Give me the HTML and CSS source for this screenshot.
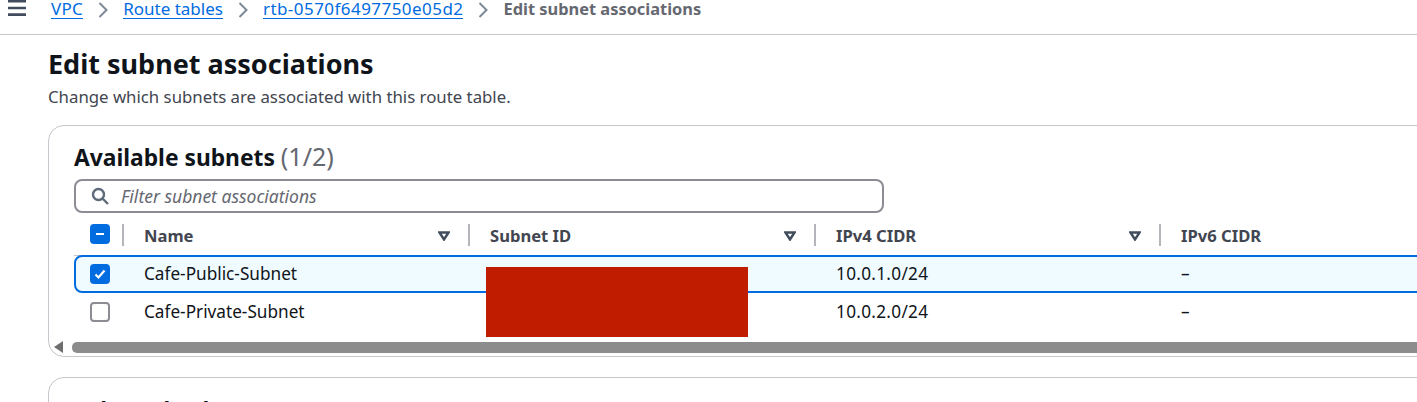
FILE: index.html
```html
<!DOCTYPE html>
<html lang="en">
<head>
    <meta charset="UTF-8">
    <title>Edit subnet associations</title>
    <link rel="stylesheet" href="styles.css">
</head>
<body>
    <div class="topbar">
        <svg class="menu" width="18" height="16" viewBox="0 0 18 16"><path d="M0 1.2h18M0 8h18M0 14.6h18" stroke="#414d5c" stroke-width="2.6" fill="none"/></svg>
        <a href="#" class="crumb vpc">VPC</a>
        <svg class="sep" width="10" height="18" viewBox="0 0 10 18"><path d="M1.5 2l7 7-7 7" stroke="#7d8998" stroke-width="2" fill="none"/></svg>
        <a href="#" class="crumb">Route tables</a>
        <svg class="sep" width="10" height="18" viewBox="0 0 10 18"><path d="M1.5 2l7 7-7 7" stroke="#7d8998" stroke-width="2" fill="none"/></svg>
        <a href="#" class="crumb id">rtb-0570f6497750e05d2</a>
        <svg class="sep" width="10" height="18" viewBox="0 0 10 18"><path d="M1.5 2l7 7-7 7" stroke="#7d8998" stroke-width="2" fill="none"/></svg>
        <span class="crumb-current">Edit subnet associations</span>
    </div>

    <div class="content">
        <h1>Edit subnet associations</h1>
        <p class="subtitle">Change which subnets are associated with this route table.</p>

        <div class="card">
            <h2>Available subnets <span class="count">(1/2)</span></h2>
            <div class="filter">
                <svg width="18" height="18" viewBox="0 0 18 18"><circle cx="7.5" cy="7.5" r="5.5" stroke="#5f6b7a" stroke-width="2.4" fill="none"/><path d="M11.5 11.5L17 17" stroke="#5f6b7a" stroke-width="2.4" fill="none"/></svg>
                <span>Filter subnet associations</span>
            </div>

            <div class="row head">
                <div class="cell check"><span class="box on"><svg width="12" height="12" viewBox="0 0 12 12"><path d="M2 6h8" stroke="#fff" stroke-width="2"/></svg></span></div>
                <div class="cell col">Name<svg class="sort" width="12" height="10" viewBox="0 0 12 10"><path d="M1.5 1.5h9L6 8.5z" stroke="#414d5c" stroke-width="2.4" fill="none"/></svg></div>
                <div class="cell col">Subnet ID<svg class="sort" width="12" height="10" viewBox="0 0 12 10"><path d="M1.5 1.5h9L6 8.5z" stroke="#414d5c" stroke-width="2.4" fill="none"/></svg></div>
                <div class="cell col">IPv4 CIDR<svg class="sort" width="12" height="10" viewBox="0 0 12 10"><path d="M1.5 1.5h9L6 8.5z" stroke="#414d5c" stroke-width="2.4" fill="none"/></svg></div>
                <div class="cell col">IPv6 CIDR</div>
            </div>

            <div class="row selected">
                <div class="cell check"><span class="box on"><svg width="14" height="14" viewBox="0 0 14 14"><path d="M2.5 7.5l3 3 6-7" stroke="#fff" stroke-width="2.2" fill="none"/></svg></span></div>
                <div class="cell">Cafe-Public-Subnet</div>
                <div class="cell"></div>
                <div class="cell num">10.0.1.0/24</div>
                <div class="cell">–</div>
            </div>
            <div class="row">
                <div class="cell check"><span class="box"></span></div>
                <div class="cell">Cafe-Private-Subnet</div>
                <div class="cell"></div>
                <div class="cell num">10.0.2.0/24</div>
                <div class="cell">–</div>
            </div>

            <div class="redact"></div>

            <div class="scrollbar">
                <svg width="10" height="12" viewBox="0 0 10 12"><path d="M9 0v12L0 6z" fill="#6f6f6f"/></svg>
                <div class="thumb"></div>
            </div>
        </div>

        <div class="card next">
            <h2>Selected subnets</h2>
        </div>
    </div>
</body>
</html>
```

FILE: styles.css
```css
* {
    margin: 0;
    padding: 0;
    box-sizing: border-box;
}
html, body {
    height: 402px;
    overflow: hidden;
}
body {
    background-color: #fff;
    color: #0f141a;
    font-family: "Noto Sans", "Open Sans", sans-serif;
    font-size: 17.2px;
}
.num {
    letter-spacing: 0.3px;
}
.topbar {
    height: 35px;
    border-bottom: 1px solid #c6c6cd;
    display: flex;
    align-items: flex-start;
    padding: 1px 0 0 7px;
    font-size: 17px;
    white-space: nowrap;
}
.menu {
    margin: -1px 25px 0 1px;
}
.crumb {
    color: #006ce0;
    text-decoration: none;
    border-bottom: 1px solid #006ce0;
    height: 18px;
    line-height: 16px;
}
.crumb.vpc {
    letter-spacing: 0.3px;
}
.crumb.id {
    letter-spacing: 0.45px;
}
.sep {
    margin: 0 15px;
}
.crumb-current {
    color: #656871;
    font-weight: 700;
    font-size: 16.4px;
    line-height: 16px;
}
.content {
    padding: 0 0 0 48px;
}
h1 {
    font-size: 27px;
    font-weight: 700;
    line-height: 36px;
    margin-top: 11px;
}
.subtitle {
    font-size: 16.8px;
    line-height: 22px;
    color: #424650;
    margin-top: 4px;
}
.card {
    width: 1500px;
    height: 232px;
    margin-top: 17px;
    padding: 16px 0 0 25px;
    border: 1px solid #c6c6cd;
    border-radius: 16px;
    position: relative;
}
.card.next {
    margin-top: 20px;
    padding-top: 19px;
}
h2 {
    font-size: 22.8px;
    font-weight: 700;
    line-height: 28px;
}
.count {
    font-weight: 400;
    font-size: 25px;
    color: #656871;
}
.filter {
    width: 810px;
    height: 34px;
    margin-top: 7px;
    padding-left: 15px;
    border: 2px solid #8c8c94;
    border-radius: 8px;
    display: flex;
    align-items: center;
    gap: 12px;
    font-size: 17.5px;
    font-style: italic;
    color: #656871;
}
.row {
    display: grid;
    grid-template-columns: 48px 346px 346px 345px 1fr;
    height: 38px;
}
.row.head {
    height: 43px;
    font-size: 16.6px;
    border-bottom: 1px solid #c6c6cd;
    font-weight: 700;
    color: #424650;
}
.row.selected {
    grid-template-columns: 46px 346px 346px 345px 1fr;
    background-color: #f0fbff;
    border: 2px solid #006ce0;
    border-radius: 8px 0 0 8px;
    margin-top: -1px;
}
.cell {
    display: flex;
    align-items: center;
    padding: 0 0 2px 22px;
    white-space: nowrap;
}
.head .cell {
    padding-bottom: 0;
}
.head .col {
    padding-top: 2px;
}
.col {
    position: relative;
}
.col::before {
    content: "";
    position: absolute;
    left: 0;
    top: 11px;
    height: 22px;
    border-left: 2px solid #b4b4bb;
}
.sort {
    position: absolute;
    right: 18px;
    top: 18px;
}
.cell.check {
    padding: 0 0 0 16px;
}
.row.selected .check {
    padding-left: 14px;
}
.box {
    width: 20px;
    height: 20px;
    border: 2px solid #8c8c94;
    border-radius: 4px;
    display: flex;
    align-items: center;
    justify-content: center;
    background-color: #fff;
}
.box.on {
    background-color: #006ce0;
    border-color: #006ce0;
}
.redact {
    position: absolute;
    left: 437px;
    top: 141px;
    width: 262px;
    height: 70px;
    background-color: #c01c00;
}
.scrollbar {
    position: absolute;
    left: 5px;
    top: 215px;
    right: 0;
    display: flex;
    align-items: center;
    gap: 8px;
}
.thumb {
    flex: 1;
    height: 11px;
    background-color: #8c8c8c;
    border-radius: 5px 0 0 5px;
}
```
